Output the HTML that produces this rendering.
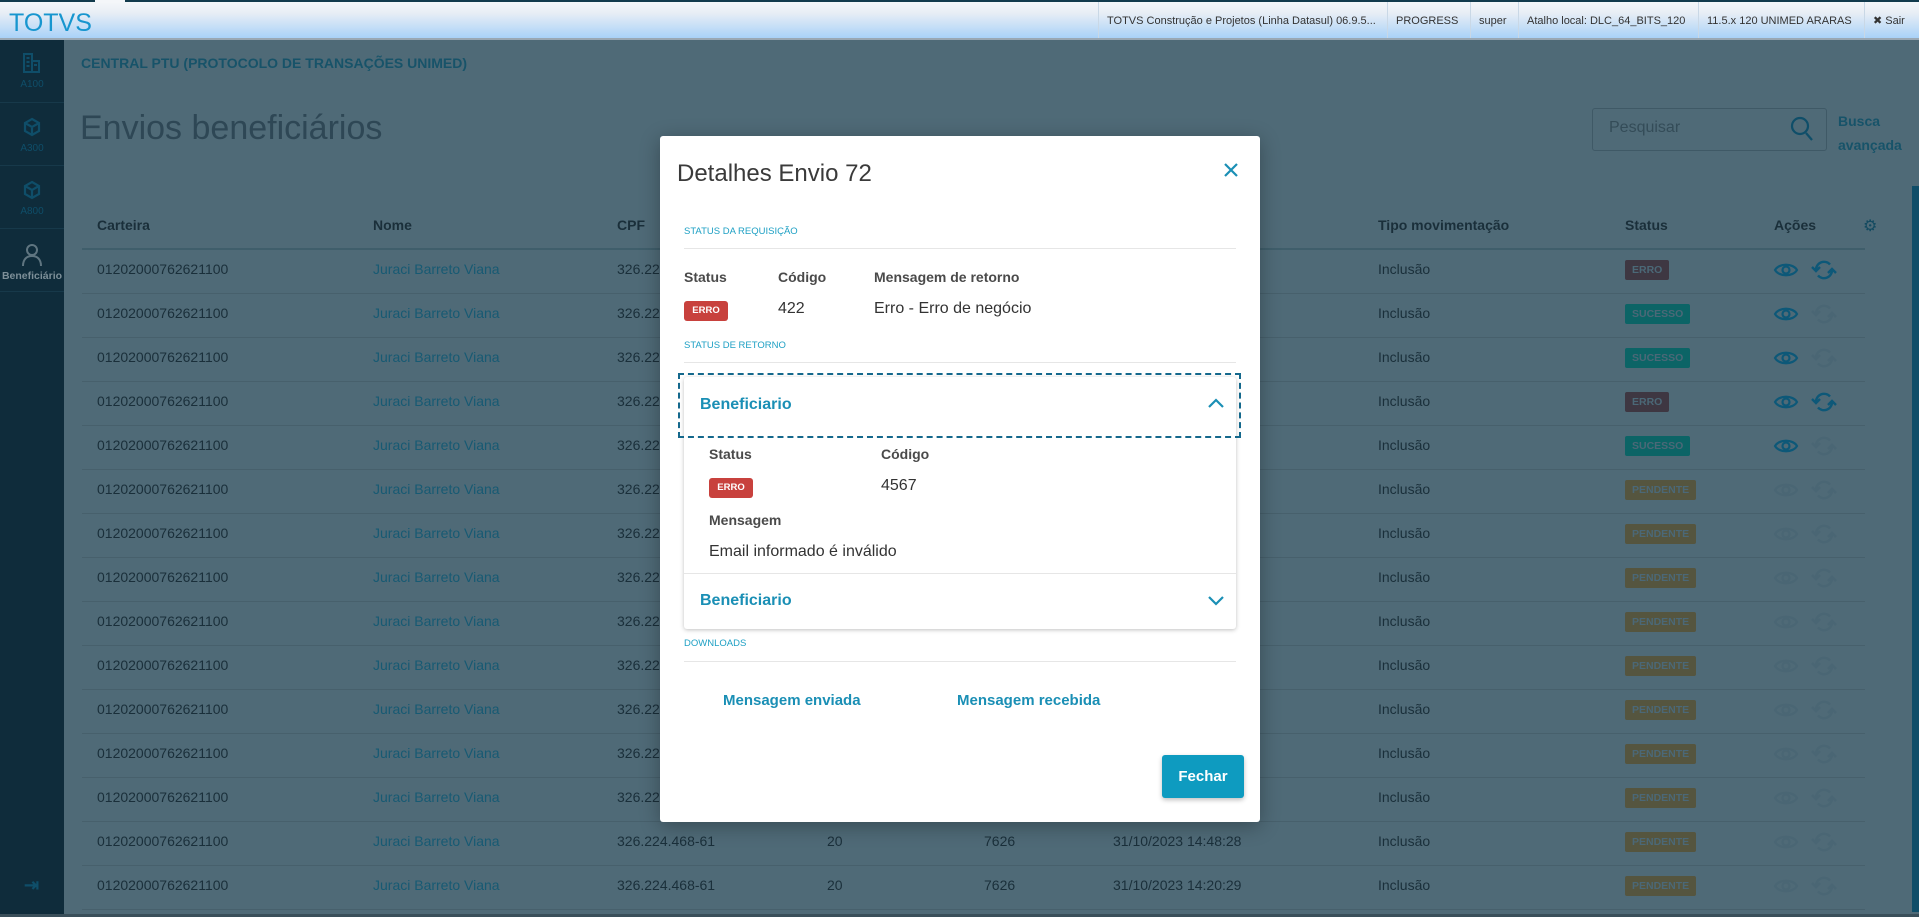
<!DOCTYPE html>
<html><head><meta charset="utf-8"><style>
*{box-sizing:border-box;margin:0;padding:0}
body{width:1919px;height:917px;overflow:hidden;font-family:"Liberation Sans",sans-serif;background:#4f6a77;position:relative}
.abs{position:absolute}
#top{left:0;top:0;width:1919px;height:40px;background:linear-gradient(#f4f6f9,#e8eef5 30%,#a9d2f8);border-bottom:2px solid #9aa8b4;border-top:2px solid #123a4c}
#top .logo{left:9px;top:7px;font-size:25px;color:#1796cf}
.hi{top:0;height:36px;border-left:1px solid #c9d8e6;font-size:11px;color:#333;line-height:38px;padding-left:8px;white-space:nowrap;overflow:hidden}
#side{left:0;top:40px;width:64px;height:877px;background:#0f2c3b}
.si{position:absolute;left:0;width:64px;height:63px;border-bottom:1px solid #17394a;text-align:center;color:#0f4e69;font-size:10px}
.hd{font-size:15px;color:#134a60;font-weight:bold}
.cell{position:absolute;font-size:14px;color:#1a2f3a;white-space:nowrap}
.link{color:#175a73}
.badge{position:absolute;height:20px;font-size:10.5px;font-weight:bold;line-height:20px;padding:0 7px;border-radius:2px;color:#4b6877}
.rl{position:absolute;left:82px;width:1783px;height:1px;background:#47606c}
#modal{left:660px;top:136px;width:600px;height:686px;background:#fff;border-radius:3px;box-shadow:0 4px 20px rgba(0,0,0,.3)}
.m{position:absolute}
.sec{font-size:9.5px;color:#1ea0c4}
.ln{height:1px;background:#e6e6e6}
.lbl{font-size:14px;color:#4a4a4a;font-weight:bold}
.val{font-size:16px;color:#333}
.red{background:#c8413d;color:#fff;font-size:9.5px;font-weight:bold;height:20px;line-height:20px;width:44px;text-align:center;border-radius:3px}
.acc{font-size:16px;color:#1a8fb5;font-weight:bold}
</style></head><body>
<div id="top" class="abs">
<div class="abs" style="left:95px;top:-2px;width:30px;height:3px;background:#f4f6f9"></div>
<div class="abs logo">TOTVS</div>
<div class="abs hi" style="left:1098px;width:289px">TOTVS Construção e Projetos (Linha Datasul) 06.9.5...</div>
<div class="abs hi" style="left:1387px;width:83px">PROGRESS</div>
<div class="abs hi" style="left:1470px;width:48px">super</div>
<div class="abs hi" style="left:1518px;width:180px">Atalho local: DLC_64_BITS_120</div>
<div class="abs hi" style="left:1698px;width:166px">11.5.x 120 UNIMED ARARAS</div>
<div class="abs hi" style="left:1864px;width:55px">✖ Sair</div>
</div>
<div id="side" class="abs">
<div class="si" style="top:0"><svg width="20" height="22" viewBox="0 0 20 22" style="margin-top:12px" fill="none" stroke="#0f4e69" stroke-width="2"><rect x="2" y="2" width="8" height="18"/><rect x="10" y="9" width="7" height="11"/><path d="M4.5 6h3M4.5 10h3M4.5 14h3M12 13h3"/></svg><div style="margin-top:2px">A100</div></div>
<div class="si" style="top:63px"><svg width="20" height="20" viewBox="0 0 20 20" style="margin-top:14px" fill="none" stroke="#0f4e69" stroke-width="2.2"><path d="M10 2L17 6V14L10 18L3 14V6Z M3 6L10 10L17 6 M10 10V18"/></svg><div style="margin-top:3px">A300</div></div>
<div class="si" style="top:126px"><svg width="20" height="20" viewBox="0 0 20 20" style="margin-top:14px" fill="none" stroke="#0f4e69" stroke-width="2.2"><path d="M10 2L17 6V14L10 18L3 14V6Z M3 6L10 10L17 6 M10 10V18"/></svg><div style="margin-top:3px">A800</div></div>
<div class="si" style="top:189px;color:#7d8f98;font-size:10.5px;font-weight:bold"><svg width="22" height="24" viewBox="0 0 22 24" style="margin-top:14px" fill="none" stroke="#5f7580" stroke-width="2"><circle cx="11" cy="7" r="5"/><path d="M2 23C2 16 6 13 11 13S20 16 20 23"/></svg><div style="margin-top:0px">Beneficiário</div></div>
<div class="abs" style="left:24px;top:835px;color:#0f4e69;font-size:18px;font-weight:bold">⇥</div>
</div>
<div class="abs" style="left:81px;top:55px;font-size:14px;font-weight:bold;color:#175369">CENTRAL PTU (PROTOCOLO DE TRANSAÇÕES UNIMED)</div>
<div class="abs" style="left:80px;top:109px;font-size:34px;color:#2e4755">Envios beneficiários</div>
<div class="abs" style="left:1592px;top:108px;width:235px;height:43px;border:1px solid #3f5966;border-radius:3px"></div>
<div class="abs" style="left:1609px;top:119px;font-size:16px;color:#344c58">Pesquisar</div>
<svg class="abs" style="left:1790px;top:116px" width="24" height="26" viewBox="0 0 24 26" fill="none" stroke="#0f4e69" stroke-width="2.2"><circle cx="10" cy="10" r="8"/><path d="M16 17L22 24"/></svg>
<div class="abs" style="left:1838px;top:109px;font-size:14px;font-weight:bold;color:#175369;line-height:24px">Busca<br>avançada</div>
<div class="abs" style="left:1912px;top:186px;width:7px;height:726px;background:#0f4e69"></div>
<div class="abs" style="left:0;top:914px;width:1919px;height:3px;background:#3a4f5a"></div>
<div class="abs" id="thead" style="left:0;top:217px;width:1919px">
<div class="cell hd" style="left:97px">Carteira</div>
<div class="cell hd" style="left:373px">Nome</div>
<div class="cell hd" style="left:617px">CPF</div>
<div class="cell hd" style="left:1378px">Tipo movimentação</div>
<div class="cell hd" style="left:1625px">Status</div>
<div class="cell hd" style="left:1774px">Ações</div>
<div class="cell" style="left:1863px;top:-1px;color:#134a60;font-size:16px">⚙</div>
</div>
<div class="abs" style="left:82px;top:248px;width:1783px;height:2px;background:#3f5e6b"></div>
<div id="rows"></div>
<script>
var st=['ERRO','SUCESSO','SUCESSO','ERRO','SUCESSO'];
var dates={13:'31/10/2023 14:48:28',14:'31/10/2023 14:20:29'};
var h='';
for(var i=0;i<15;i++){
 var y=261+i*44;
 var s=st[i]||'PENDENTE';
 var bg=s=='ERRO'?'#3e3742':s=='SUCESSO'?'#0c6466':'#55553f';
 var eyeOn=i<5, refOn=(i==0||i==3);
 var ec=eyeOn?'#0d5878':'#4a6674', rc=refOn?'#0d5878':'#4a6674';
 h+='<div class="cell" style="left:97px;top:'+y+'px">01202000762621100</div>';
 h+='<div class="cell link" style="left:373px;top:'+y+'px">Juraci Barreto Viana</div>';
 h+='<div class="cell" style="left:617px;top:'+y+'px">'+(i>=13?'326.224.468-61':'326.22')+'</div>';
 if(i>=13){h+='<div class="cell" style="left:827px;top:'+y+'px">20</div><div class="cell" style="left:984px;top:'+y+'px">7626</div><div class="cell" style="left:1113px;top:'+y+'px">'+dates[i]+'</div>';}
 h+='<div class="cell" style="left:1378px;top:'+y+'px">Inclusão</div>';
 h+='<div class="badge" style="left:1625px;top:'+(y-1)+'px;background:'+bg+'">'+s+'</div>';
 h+='<svg class="abs" style="left:1773px;top:'+(y-2)+'px" width="26" height="22" viewBox="0 0 26 22" fill="none" stroke="'+ec+'" stroke-width="2.2"><path d="M2 11C6 4 20 4 24 11C20 18 6 18 2 11Z"/><circle cx="13" cy="11" r="3.5"/></svg>';
 h+='<svg class="abs" style="left:1811px;top:'+(y-3)+'px" width="26" height="24" viewBox="0 0 26 24" fill="none" stroke="'+rc+'" stroke-width="2.4"><path d="M5 12A8 8 0 0 1 19 6.5M21 12A8 8 0 0 1 7 17.5"/><path d="M1 9L5 13L9 9M17 15L21 11L25 15"/></svg>';
 h+='<div class="rl" style="top:'+(y+32)+'px"></div>';
}
document.getElementById('rows').innerHTML=h;
</script>
<div id="modal" class="abs">
<div class="m" style="left:17px;top:24px;font-size:24px;color:#3a3a3a">Detalhes Envio 72</div>
<svg class="m" style="left:564px;top:27px" width="14" height="14" viewBox="0 0 14 14" stroke="#1a8fb5" stroke-width="2.2"><path d="M1 1L13 13M13 1L1 13"/></svg>
<div class="m sec" style="left:24px;top:90px">STATUS DA REQUISIÇÃO</div>
<div class="m ln" style="left:24px;top:112px;width:552px"></div>
<div class="m lbl" style="left:24px;top:133px">Status</div>
<div class="m lbl" style="left:118px;top:133px">Código</div>
<div class="m lbl" style="left:214px;top:133px">Mensagem de retorno</div>
<div class="m red" style="left:24px;top:165px">ERRO</div>
<div class="m val" style="left:118px;top:164px">422</div>
<div class="m val" style="left:214px;top:164px">Erro - Erro de negócio</div>
<div class="m sec" style="left:24px;top:204px">STATUS DE RETORNO</div>
<div class="m ln" style="left:24px;top:226px;width:552px"></div>
<div class="m" style="left:24px;top:241px;width:552px;height:252px;box-shadow:0 1px 4px rgba(0,0,0,.25);border-radius:3px;background:#fff"></div>
<div class="m" style="left:18px;top:237px;width:563px;height:65px;border:2px dashed #14688c"></div>
<div class="m acc" style="left:40px;top:260px">Beneficiario</div>
<svg class="m" style="left:548px;top:262px" width="16" height="10" viewBox="0 0 16 10" fill="none" stroke="#1a8fb5" stroke-width="2.2"><path d="M1 9L8 2L15 9"/></svg>
<div class="m lbl" style="left:49px;top:310px">Status</div>
<div class="m lbl" style="left:221px;top:310px">Código</div>
<div class="m red" style="left:49px;top:342px">ERRO</div>
<div class="m val" style="left:221px;top:341px">4567</div>
<div class="m lbl" style="left:49px;top:376px">Mensagem</div>
<div class="m val" style="left:49px;top:407px">Email informado é inválido</div>
<div class="m ln" style="left:24px;top:437px;width:552px"></div>
<div class="m acc" style="left:40px;top:456px">Beneficiario</div>
<svg class="m" style="left:548px;top:460px" width="16" height="10" viewBox="0 0 16 10" fill="none" stroke="#1a8fb5" stroke-width="2.2"><path d="M1 1L8 8L15 1"/></svg>
<div class="m sec" style="left:24px;top:502px">DOWNLOADS</div>
<div class="m ln" style="left:24px;top:525px;width:552px"></div>
<div class="m acc" style="left:63px;top:556px;font-size:15px">Mensagem enviada</div>
<div class="m acc" style="left:297px;top:556px;font-size:15px">Mensagem recebida</div>
<div class="m" style="left:502px;top:619px;width:82px;height:43px;background:#0e9bc0;border-radius:3px;color:#fff;font-weight:bold;font-size:15px;text-align:center;line-height:43px;box-shadow:0 2px 5px rgba(0,0,0,.25)">Fechar</div>
</div>
</body></html>
